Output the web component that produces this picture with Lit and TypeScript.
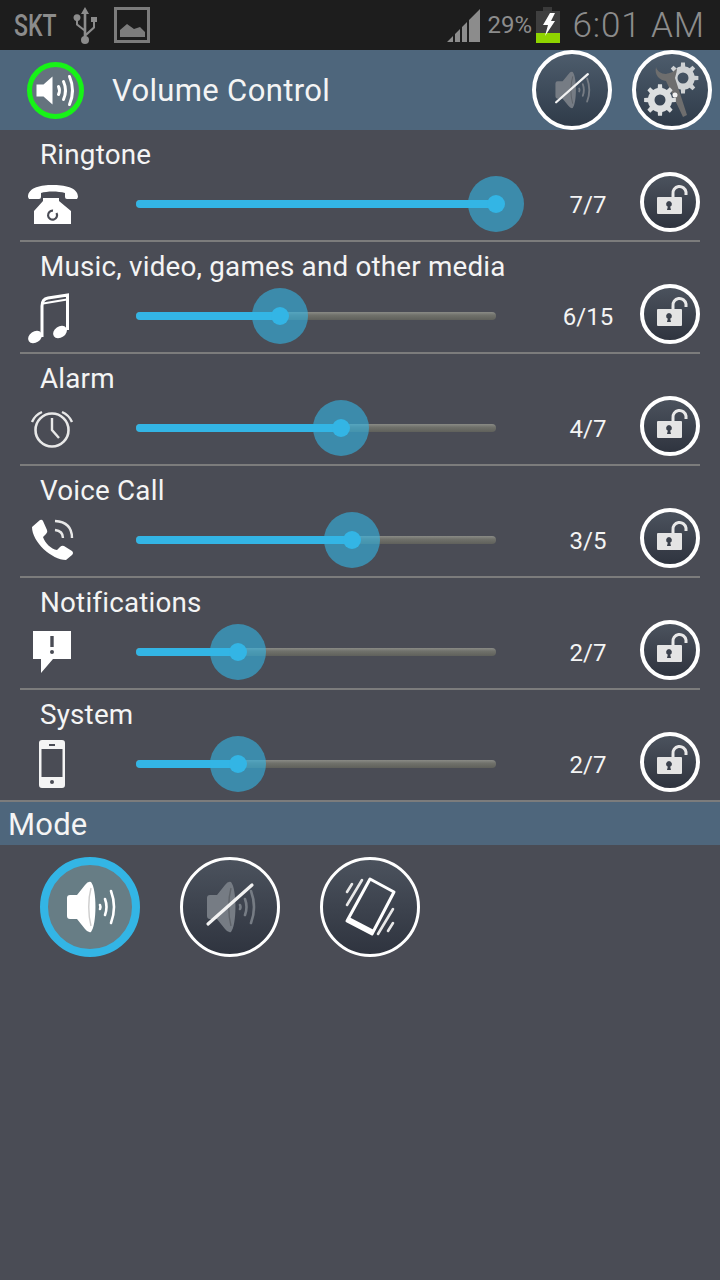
import { LitElement, html, css, svg } from "lit";
import { customElement } from "lit/decorators.js";

const gearPath = (cx: number, cy: number, r: number, teeth: number, hole: number) => {
  const pts: string[] = [];
  const step = (Math.PI * 2) / teeth;
  for (let i = 0; i < teeth; i++) {
    const a = i * step;
    const seq: [number, number][] = [
      [a - step * 0.5, r * 0.76],
      [a - step * 0.24, r * 0.76],
      [a - step * 0.16, r],
      [a + step * 0.16, r],
      [a + step * 0.24, r * 0.76],
    ];
    for (const [t, rr] of seq) pts.push(`${(cx + Math.cos(t) * rr).toFixed(2)} ${(cy + Math.sin(t) * rr).toFixed(2)}`);
  }
  return `M${pts.join("L")}Z M${cx + hole} ${cy} a${hole} ${hole} 0 1 0 ${-2 * hole} 0 a${hole} ${hole} 0 1 0 ${2 * hole} 0Z`;
};

const speakerBody = "M-23 -9Q-23 -12 -20 -12L-13 -12L-5 -22Q-2 -26 1 -25C7 -18 7 18 1 25Q-2 26 -5 22L-13 12L-20 12Q-23 12 -23 9Z";

const speaker = (c: string) => svg`
  <path d=${speakerBody} fill=${c}/>
  <path d="M1 -19C-2 -8 -2 8 1 19" fill="none" stroke="rgba(0,0,0,.2)" stroke-width="1.4"/>
  <path d="M10 -2Q11 0 10 2M15 -8Q18 0 15 8M21 -16Q27 0 21 16" fill="none" stroke=${c} stroke-width="2.6" stroke-linecap="round"/>`;

const muteIcon = svg`${speaker("#767c84")}<path d="M-22 17L22 -22" stroke="#f2f2f2" stroke-width="3.2" stroke-linecap="round"/>`;

const vibrateIcon = svg`
  <path d="M0 -28L24 -15L2 27L-23 14Z" fill="none" stroke="#fff" stroke-width="3" stroke-linejoin="round"/>
  <path d="M-23 14L2 27L4 23L-21 10Z" fill="#fff"/>
  <path d="M-8 -27L-23 -2M-18 -23L-23 -15M23 2L8 27M23 16L18 24" stroke="#e8e8e8" stroke-width="2.6" stroke-linecap="round"/>`;

const settingsIcon = svg`
  <path fill-rule="evenodd" fill="#cfd2d4" d=${gearPath(11, -12, 15.5, 8, 5.5)}/>
  <path d="M-16 -23C-18 -14 -12 -10 -6 -9L11 27L15 25L3 -12C4 -16 5 -19 5 -22C2 -18 -2 -17 -6 -16C-11 -16 -15 -19 -16 -23Z" fill="#6e6e6e"/>
  <path fill-rule="evenodd" fill="#dcdfe0" d=${gearPath(-12, 10, 16, 8, 5.5)}/>
  <circle cx="3" cy="5" r="2.5" fill="#f2f2f2"/>`;

const lockIcon = svg`
  <g transform="translate(0 2)">
    <path d="M3 -7V-10A6.500 6.500 0 0 1 16 -12V-9" fill="none" stroke="#e8e8e8" stroke-width="3"/>
    <path fill-rule="evenodd" fill="#e4e4e4" d="M-12 -7H11Q12 -7 12 -6V9Q12 10 11 10H-12Q-13 10 -13 9V-6Q-13 -7 -12 -7ZM-1 -3A3 3 0 0 0 -2.200 2.700L-3 6H1L0.200 2.700A3 3 0 0 0 -1 -3Z"/>
  </g>`;

const icons: Record<string, unknown> = {
  ring: svg`
    <path d="M-24 -7C-24 -17 -10 -19 0 -19C12 -19 26 -17 26 -7L25 -5H15Q13 -5 13 -7V-11C6 -13 -5 -13 -11 -11V-7Q-11 -5 -13 -5H-23Z" fill="#fff"/>
    <path d="M-9 -6H7V-3L19 7V20H-18V7L-9 -3Z" fill="#fff"/>
    <path d="M4.500 9A4.500 4.500 0 1 1 1 6.700" fill="none" stroke="#4a4c55" stroke-width="2.2"/>`,
  music: svg`
    <ellipse cx="-17" cy="21" rx="7.500" ry="5.500" transform="rotate(-35 -17 21)" fill="#fff"/>
    <ellipse cx="8" cy="16" rx="7.500" ry="5.500" transform="rotate(-35 8 16)" fill="#fff"/>
    <path d="M-10 21V-10Q-10 -17 -4 -18L15.500 -21V14" fill="none" stroke="#fff" stroke-width="3"/>
    <path d="M-9 -12.500L15 -16.500" stroke="#fff" stroke-width="2.200"/>`,
  alarm: svg`
    <circle cx="0" cy="2" r="16.500" fill="none" stroke="#e8e8e8" stroke-width="2.600"/>
    <path d="M0 -10V2L7 10" fill="none" stroke="#e8e8e8" stroke-width="2.400"/>
    <path d="M-20 -6Q-17 -13 -10 -16M20 -6Q17 -13 10 -16" fill="none" stroke="#e8e8e8" stroke-width="2.400"/>`,
  voice: svg`
    <path fill="#fff" d="M-20 -13L-12 -20Q-10 -21 -9 -19L-5 -10Q-4 -8 -6 -6L-9 -3C-7 3 -1 9 5 10L8 7Q10 5 12 6L20 11Q22 13 20 15L14 20C0 20 -20 2 -20 -13Z"/>
    <path d="M3 -10Q11 -9 11 -2M3 -19Q20 -18 20 -2" fill="none" stroke="#e8e8e8" stroke-width="2.400"/>`,
  notif: svg`
    <path d="M-19 -21H19V7H1L-11 21V7H-19Z" fill="#fff"/>
    <path d="M0 -16V-5" stroke="#4a4c55" stroke-width="3.400"/>
    <circle cx="0" cy="0" r="2" fill="#4a4c55"/>`,
  system: svg`
    <path fill-rule="evenodd" fill="#f4f4f4" d="M-10 -24H10Q13 -24 13 -21V21Q13 24 10 24H-10Q-13 24 -13 21V-21Q-13 -24 -10 -24ZM-10.500 -15V13H10.500V-15Z"/>
    <path d="M-3 -19H3" stroke="#4a4c55" stroke-width="2"/>
    <circle cx="0" cy="18" r="2" fill="#4a4c55"/>`,
};

const rows = [
  { label: "Ringtone", icon: "ring", pct: 100, value: "7/7" },
  { label: "Music, video, games and other media", icon: "music", pct: 40, value: "6/15" },
  { label: "Alarm", icon: "alarm", pct: 57, value: "4/7" },
  { label: "Voice Call", icon: "voice", pct: 60, value: "3/5" },
  { label: "Notifications", icon: "notif", pct: 28.4, value: "2/7" },
  { label: "System", icon: "system", pct: 28.4, value: "2/7" },
];

@customElement("app-root")
export class AppRoot extends LitElement {
  static styles = css`
    :host { display: block; width: 720px; height: 1280px; background: #4a4c55; font-family: Roboto, sans-serif; color: #f4f4f4; overflow: hidden; }
    svg { display: block; overflow: visible; }
    .status { height: 50px; background: #1d1d1d; display: flex; align-items: center; color: #8c8c8c; }
    .skt { display: block; font-size: 32px; font-weight: 500; margin-left: 14px; width: 58px; transform: scaleX(0.72); transform-origin: left center; }
    .usb { margin-right: 16px; }
    .spacer { flex: 1; }
    .pct { font-size: 24px; margin-left: 7px; width: 49px; }
    .time { font-size: 35px; font-weight: 300; margin-left: 12px; margin-right: 15px; letter-spacing: 0.9px; }
    .header { height: 80px; background: #4e667c; display: flex; align-items: center; }
    .head-ind { width: 57px; height: 57px; box-sizing: border-box; margin-left: 27px; border-radius: 50%; border: 5px solid #17f317; background: #65737e; display: flex; align-items: center; justify-content: center; }
    .title { font-size: 31px; line-height: 36px; padding-top: 2px; margin-left: 28px; flex: 1; letter-spacing: 0.35px; }
    .circle { box-sizing: border-box; border-radius: 50%; border: 3px solid #fff; background: linear-gradient(#4b525d, #2f343f); display: flex; align-items: center; justify-content: center; flex: none; }
    .c80 { width: 80px; height: 80px; border-width: 4px; background: linear-gradient(#4d5c6c, #2f3b49); }
    .c80.first { margin-right: 20px; }
    .c80.last { margin-right: 8px; }
    .c60 { width: 60px; height: 60px; margin: 0 0 4px 2px; border-width: 4px; }
    .c100 { width: 100px; height: 100px; }
    .row { margin: 0 20px; height: 112px; box-sizing: border-box; border-bottom: 2px solid #7c7c7c; padding-top: 9px; }
    .row.final { height: 110px; border-bottom: 0; }
    .label { font-size: 27.8px; line-height: 32px; padding-left: 20px; margin-bottom: 3px; white-space: nowrap; letter-spacing: 0.2px; }
    .controls { display: flex; align-items: center; height: 60px; }
    .icon { margin-left: 2px; flex: none; }
    .slider { position: relative; width: 360px; height: 8px; margin-left: 54px; flex: none; border-radius: 4px; background: linear-gradient(#8a8b86, #70716b 40%, #5f605b); }
    .fill { position: absolute; left: 0; top: 0; bottom: 0; background: #33b5e5; border-radius: 4px 0 0 4px; }
    .halo { position: absolute; top: 4px; width: 56px; height: 56px; margin: -28px 0 0 -28px; border-radius: 50%; background: rgba(51, 181, 229, 0.6); }
    .dot { position: absolute; top: 4px; width: 18px; height: 18px; margin: -9px 0 0 -9px; border-radius: 50%; background: #33b5e5; }
    .value { width: 100px; margin-left: 42px; padding-top: 2px; text-align: center; font-size: 24px; flex: none; }
    .mode { height: 43px; border-top: 2px solid #7c7c7c; background: #4e667c; font-size: 31px; line-height: 46px; padding-left: 8px; letter-spacing: 0.2px; }
    .modes { display: flex; gap: 40px; padding: 12px 0 0 40px; }
    .sel { border: 8px solid #33b5e5; background: #677d85; }
  `;

  private ic(body: unknown, size: number, vb: number, cls = "") {
    const o = -vb / 2;
    return html`<svg class=${cls} width=${size} height=${size} viewBox="${o} ${o} ${vb} ${vb}">${body}</svg>`;
  }

  render() {
    return html`
      <div class="status">
        <span class="skt">SKT</span>
        <svg class="usb" width="26" height="40" viewBox="0 0 26 40">
          <path d="M13 2L17 9H14.300V28L21 22V17H19V12H25V17H23V23L14.300 31V33H11.700V26L4 20V16A3.500 3.500 0 1 1 6 16V19L11.700 23.500V9H9Z" fill="#8c8c8c"/>
          <circle cx="13" cy="35" r="4" fill="#8c8c8c"/>
        </svg>
        <svg width="36" height="36" viewBox="0 0 36 36">
          <rect x="1.500" y="1.500" width="33" height="33" fill="none" stroke="#7c7c7c" stroke-width="3"/>
          <path d="M6 30V23L13 17L20 22L26 20L31 25V30Z" fill="#7c7c7c"/>
        </svg>
        <span class="spacer"></span>
        <svg width="33" height="33" viewBox="0 0 33 33">
          <path d="M0 33L6 27V33ZM8 25L13 20V33H8ZM15 18L20 13V33H15ZM22 11L33 0V33H22Z" fill="#8c8c8c"/>
        </svg>
        <span class="pct">29%</span>
        <svg width="24" height="36" viewBox="0 0 24 36">
          <path d="M7 0H16V4H7Z" fill="#3a3a3a"/>
          <rect x="0" y="4" width="24" height="22" fill="#3f3f3f"/>
          <rect x="0" y="26" width="24" height="10" fill="#8fd400"/>
          <path d="M14 6H19L15 14H19L9 29L12 18H7Z" fill="#fff"/>
        </svg>
        <span class="time">6:01 AM</span>
      </div>
      <div class="header">
        <div class="head-ind">
          <svg width="47" height="47" viewBox="-23.500 -23.500 47 47">
            <path d="M-19 -6H-12L-3 -14V14L-12 6H-19Z" fill="#fff"/>
            <path d="M3 -4Q5 0 3 4M8 -9Q12 0 8 9M14 -14Q20 0 14 14" fill="none" stroke="#fff" stroke-width="3" stroke-linecap="round"/>
          </svg>
        </div>
        <div class="title">Volume Control</div>
        <div class="circle c80 first">${this.ic(muteIcon, 72, 100)}</div>
        <div class="circle c80 last">${this.ic(settingsIcon, 72, 72)}</div>
      </div>
      ${rows.map((r, i) => html`
        <div class="row ${i === rows.length - 1 ? "final" : ""}">
          <div class="label">${r.label}</div>
          <div class="controls">
            ${this.ic(icons[r.icon], 60, 60, "icon")}
            <div class="slider">
              <div class="fill" style="width:${r.pct}%"></div>
              <div class="halo" style="left:${r.pct}%"></div>
              <div class="dot" style="left:${r.pct}%"></div>
            </div>
            <div class="value">${r.value}</div>
            <div class="circle c60">${this.ic(lockIcon, 52, 52)}</div>
          </div>
        </div>
      `)}
      <div class="mode">Mode</div>
      <div class="modes">
        <div class="circle c100 sel">${this.ic(speaker("#fff"), 84, 84)}</div>
        <div class="circle c100">${this.ic(muteIcon, 94, 94)}</div>
        <div class="circle c100">${this.ic(vibrateIcon, 94, 94)}</div>
      </div>
    `;
  }
}
